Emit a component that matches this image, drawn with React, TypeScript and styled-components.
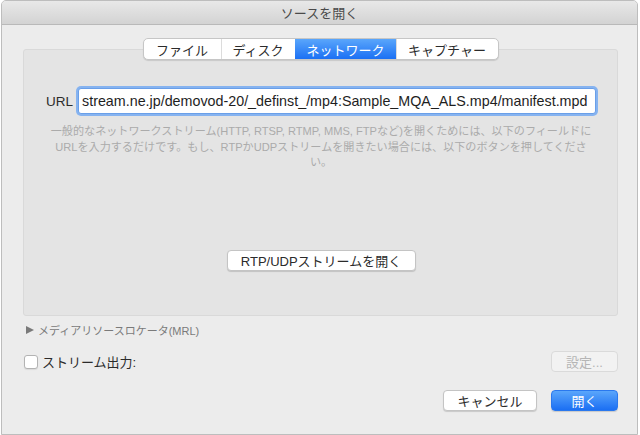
import React from "react";
import styled, { createGlobalStyle } from "styled-components";

const Global = createGlobalStyle`
  html, body { margin: 0; padding: 0; background: #ffffff; }
  body { font-family: "Liberation Sans", "Noto Sans CJK JP", sans-serif; }
  * { box-sizing: border-box; }
`;

const Window = styled.div`
  width: 637px;
  height: 435px;
  margin-left: 1px;
  background: #ececec;
  border: 1px solid #bdbdbd;
  border-radius: 5px 5px 0 0;
  display: flex;
  flex-direction: column;
  overflow: hidden;
`;

const TitleBar = styled.div`
  height: 24px;
  flex: none;
  background: linear-gradient(#e8e8e8, #d3d3d3);
  border-bottom: 1px solid #b9b9b9;
  display: flex;
  align-items: center;
  justify-content: center;
  font-size: 13px;
  color: #4a4a4a;
`;

const Body = styled.div`
  flex: 1;
  display: flex;
  flex-direction: column;
  padding: 13px 19px 0 21px;
`;

const TabStrip = styled.div`
  display: flex;
  justify-content: center;
  margin-bottom: -11px;
  position: relative;
  z-index: 1;
`;

const Segmented = styled.div`
  display: flex;
  height: 22px;
  background: #fff;
  border: 1px solid #c6c6c6;
  border-radius: 5px;
  box-shadow: 0 1px 1px rgba(0,0,0,0.12);
  overflow: hidden;
`;

const Tab = styled.div<{ $active?: boolean; $w: number }>`
  width: ${(p) => p.$w}px;
  display: flex;
  align-items: center;
  justify-content: center;
  font-size: 13px;
  color: ${(p) => (p.$active ? "#fff" : "#2b2b2b")};
  background: ${(p) => (p.$active ? "linear-gradient(#5aa6fb, #1b70f4)" : "transparent")};
  border-left: 1px solid ${(p) => (p.$active ? "transparent" : "#dcdcdc")};
  &:first-child { border-left: none; }
`;

const Panel = styled.div`
  height: 267px;
  background: #e4e4e4;
  border: 1px solid #d9d9d9;
  border-radius: 3px;
  display: flex;
  flex-direction: column;
  padding: 38px 21px 0 22px;
`;

const UrlRow = styled.div`
  display: flex;
  align-items: center;
  gap: 5px;
`;

const Label = styled.span`
  font-size: 13.5px;
  color: #2b2b2b;
`;

const UrlInput = styled.div`
  flex: 1;
  height: 26px;
  background: #fff;
  border: 1px solid #6a9fe8;
  border-radius: 3px;
  box-shadow: 0 0 0 2px #86b3f0;
  display: flex;
  align-items: center;
  padding-left: 3px;
  font-size: 14.3px;
  color: #1e1e1e;
  white-space: nowrap;
  overflow: hidden;
`;

const Description = styled.div`
  margin-top: 10px;
  margin-left: -6px;
  margin-right: -6px;
  font-size: 11.1px;
  line-height: 15.5px;
  color: #ababab;
  text-align: center;
  white-space: nowrap;
`;

const CenterRow = styled.div`
  margin-top: auto;
  margin-bottom: 44px;
  display: flex;
  justify-content: center;
`;

const PushButton = styled.div<{ $w: number; $primary?: boolean; $disabled?: boolean }>`
  width: ${(p) => p.$w}px;
  height: 21px;
  border-radius: 4px;
  display: flex;
  align-items: center;
  justify-content: center;
  font-size: 13px;
  color: ${(p) => (p.$primary ? "#fff" : p.$disabled ? "#b5b5b5" : "#2b2b2b")};
  background: ${(p) =>
    p.$primary ? "linear-gradient(#5aa6fb, #1b6ff3)" : p.$disabled ? "#f2f2f2" : "#fff"};
  border: 1px solid ${(p) => (p.$primary ? "#2a78ee" : p.$disabled ? "#dadada" : "#c4c4c4")};
  box-shadow: ${(p) => (p.$disabled ? "none" : "0 1px 1px rgba(0,0,0,0.15)")};
`;

const Disclosure = styled.div`
  margin-top: 6px;
  margin-left: 3px;
  display: flex;
  align-items: center;
  gap: 4px;
  font-size: 11px;
  color: #7a7a7a;
`;

const Triangle = styled.span`
  width: 0;
  height: 0;
  border-top: 4.5px solid transparent;
  border-bottom: 4.5px solid transparent;
  border-left: 8px solid #7a7a7a;
`;

const StreamRow = styled.div`
  margin-top: 13px;
  display: flex;
  align-items: center;
  justify-content: space-between;
  padding-left: 1px;
`;

const CheckLabel = styled.div`
  display: flex;
  align-items: center;
  gap: 4px;
  font-size: 13px;
  color: #2b2b2b;
`;

const CheckBox = styled.span`
  width: 14px;
  height: 14px;
  background: #fff;
  border: 1px solid #b3b3b3;
  border-radius: 3px;
  box-shadow: 0 1px 1px rgba(0,0,0,0.08);
`;

const Footer = styled.div`
  margin-top: 18px;
  display: flex;
  justify-content: flex-end;
  gap: 14px;
`;

export default function App() {
  return (
    <>
      <Global />
      <Window>
        <TitleBar>ソースを開く</TitleBar>
        <Body>
          <TabStrip>
            <Segmented>
              <Tab $w={77}>ファイル</Tab>
              <Tab $w={74}>ディスク</Tab>
              <Tab $w={101} $active>ネットワーク</Tab>
              <Tab $w={102}>キャプチャー</Tab>
            </Segmented>
          </TabStrip>
          <Panel>
            <UrlRow>
              <Label>URL</Label>
              <UrlInput>stream.ne.jp/demovod-20/_definst_/mp4:Sample_MQA_ALS.mp4/manifest.mpd</UrlInput>
            </UrlRow>
            <Description>
              一般的なネットワークストリーム(HTTP, RTSP, RTMP, MMS, FTPなど)を開くためには、以下のフィールドに
              <br />
              URLを入力するだけです。もし、RTPかUDPストリームを開きたい場合には、以下のボタンを押してくださ
              <br />
              い。
            </Description>
            <CenterRow>
              <PushButton $w={189}>RTP/UDPストリームを開く</PushButton>
            </CenterRow>
          </Panel>
          <Disclosure>
            <Triangle />
            メディアリソースロケータ(MRL)
          </Disclosure>
          <StreamRow>
            <CheckLabel>
              <CheckBox />
              ストリーム出力:
            </CheckLabel>
            <PushButton $w={67} $disabled>設定...</PushButton>
          </StreamRow>
          <Footer>
            <PushButton $w={94}>キャンセル</PushButton>
            <PushButton $w={67} $primary>開く</PushButton>
          </Footer>
        </Body>
      </Window>
    </>
  );
}
